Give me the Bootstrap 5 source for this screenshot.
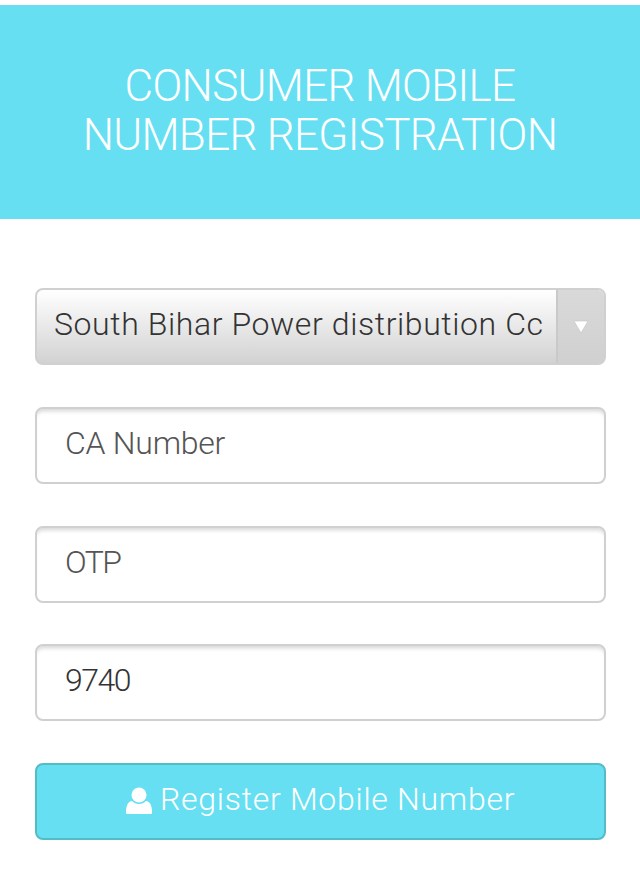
<!DOCTYPE html>
<html lang="en">
<head>
<meta charset="utf-8">
<title>Consumer Mobile Number Registration</title>
<link href="https://cdn.jsdelivr.net/npm/bootstrap@5.3.0/dist/css/bootstrap.min.css" rel="stylesheet">
<style>
html,body{background:#fff;font-family:"Roboto","Liberation Sans",sans-serif;}
.reg-page{padding-top:5px;}
.reg-head{background:#66dff2;height:214px;color:#fff;padding-bottom:3px;}
.reg-title{font-family:"Roboto",sans-serif;font-weight:300;font-size:44px;line-height:49px;letter-spacing:-.7px;margin:0;}
.reg-form{padding:69px 34px 0 35px;gap:41.75px;}
.reg-box{height:77px;border:2px solid #cfd0d0;border-radius:8px;font-size:32px;font-weight:300;}
.reg-input{padding:0 28px 5px;color:#333;box-shadow:inset 0 5px 4px -3px #d4d4d4;background:#fff;font-family:"Roboto",sans-serif;letter-spacing:-.25px;}
.reg-input::placeholder{color:#555;opacity:1;}
.reg-tight{letter-spacing:-1.5px;}
.reg-select{background:linear-gradient(#fff,#d2d2d2);color:#333;overflow:hidden;border-color:#d0d0d0;}
.reg-select-text{padding:0 0 5px 17px;min-width:0;white-space:nowrap;letter-spacing:.6px;}
.reg-select-arrow{width:48px;background:linear-gradient(#d9d9d9,#d0d0d0);border-left:2px solid #c9c9c9;}
.reg-btn{background:#66dff2;border:2px solid #54bcc6;color:#fff;font-size:32px;letter-spacing:.72px;padding:0 0 5px 89px;}
.reg-btn:hover{background:#66dff2;color:#fff;border-color:#54bcc6;}
.reg-btn svg{margin-top:3px;}
</style>
</head>
<body>
<div class="reg-page">
  <header class="reg-head d-flex align-items-center justify-content-center text-center">
    <h1 class="reg-title">CONSUMER MOBILE<br>NUMBER REGISTRATION</h1>
  </header>
  <form class="reg-form d-flex flex-column">
    <div class="reg-box reg-select d-flex align-items-stretch">
      <div class="reg-select-text flex-grow-1 d-flex align-items-center">South Bihar Power distribution Cc</div>
      <div class="reg-select-arrow flex-shrink-0 d-flex align-items-center justify-content-center">
        <svg width="14" height="14" viewBox="0 0 14 14" aria-hidden="true"><path d="M0 1h14L7 13z" fill="#fff" stroke="#c4c4c4" stroke-width=".6"/></svg>
      </div>
    </div>
    <input class="reg-box reg-input form-control" type="text" placeholder="CA Number">
    <input class="reg-box reg-input reg-tight form-control" type="text" placeholder="OTP">
    <input class="reg-box reg-input reg-tight form-control" type="text" value="9740">
    <button class="reg-box reg-btn btn d-flex align-items-center gap-2" type="button">
      <svg width="26" height="28" viewBox="0 0 26 28" aria-hidden="true" fill="#fff"><circle cx="13" cy="8" r="7.5"/><path d="M1 27c-1 0-1-1-1-2 0-6 2-11 6-11 2 2 4 3 7 3s5-1 7-3c4 0 6 5 6 11 0 1 0 2-1 2z"/></svg>
      <span>Register Mobile Number</span>
    </button>
  </form>
</div>
</body>
</html>
